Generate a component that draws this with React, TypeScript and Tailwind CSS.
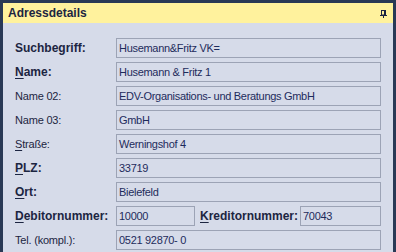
import React from "react";

const font = { fontFamily: '"Liberation Sans", Arial, sans-serif' };

function Label({ text, u, bold }: { text: string; u?: boolean; bold?: boolean }) {
  const first = text[0];
  const rest = text.slice(1);
  return (
    <span
      className={`${bold ? "font-bold text-[12px]" : "text-[11px] tracking-[-0.2px]"} text-[#1c2541] leading-[20px] whitespace-nowrap`}
    >
      {u ? <span className="underline underline-offset-2">{first}</span> : first}
      {rest}
    </span>
  );
}

function Field({ value, w }: { value: string; w?: string }) {
  return (
    <div
      className={`${w ?? "flex-1"} h-[20px] border border-[#9ca3b5] bg-[#d6dbe9] pl-[2px] text-[11px] tracking-[-0.3px] leading-[18px] text-[#1e2b5c] whitespace-nowrap overflow-hidden`}
    >
      {value}
    </div>
  );
}

function Row({ label, u, bold, value }: { label: string; u?: boolean; bold?: boolean; value: string }) {
  return (
    <div className="flex items-center h-[20px]">
      <div className="w-[101px] shrink-0 flex items-center">
        <Label text={label} u={u} bold={bold} />
      </div>
      <Field value={value} />
    </div>
  );
}

export default function App() {
  return (
    <div className="w-[396px] h-[252px] bg-[#293955] pt-[3px] pl-[3px] pr-[3px] overflow-hidden" style={font}>
      <div className="h-full bg-[#d6dbe9] flex flex-col">
        <div className="h-[20px] bg-[#fff29d] flex items-center justify-between pl-[5px] pr-[6px]">
          <span className="font-bold text-[12px] text-[#1c2541]">Adressdetails</span>
          <svg width="7" height="8" viewBox="0 0 7 8" className="mt-[1px]">
            <rect x="1.5" y="0.5" width="3" height="4.5" fill="none" stroke="#1c2541" strokeWidth="1" />
            <rect x="4" y="0" width="2" height="5" fill="#1c2541" />
            <rect x="0" y="5" width="7" height="1" fill="#1c2541" />
            <rect x="3" y="6" width="1" height="2" fill="#1c2541" />
          </svg>
        </div>
        <div className="flex flex-col gap-[4px] pt-[15px] pl-[12px] pr-[12px]">
          <Row label="Suchbegriff:" bold value="Husemann&Fritz VK=" />
          <Row label="Name:" bold u value="Husemann & Fritz 1" />
          <Row label="Name 02:" value="EDV-Organisations- und Beratungs GmbH" />
          <Row label="Name 03:" value="GmbH" />
          <Row label="Straße:" u value="Werningshof 4" />
          <Row label="PLZ:" bold u value="33719" />
          <Row label="Ort:" bold u value="Bielefeld" />
          <div className="flex items-center h-[20px]">
            <div className="w-[101px] shrink-0 flex items-center">
              <Label text="Debitornummer:" bold u />
            </div>
            <Field value="10000" w="w-[79px] shrink-0" />
            <div className="w-[105px] shrink-0 pl-[5px] flex items-center">
              <Label text="Kreditornummer:" bold u />
            </div>
            <Field value="70043" />
          </div>
          <Row label="Tel. (kompl.):" value="0521 92870- 0" />
        </div>
      </div>
    </div>
  );
}
